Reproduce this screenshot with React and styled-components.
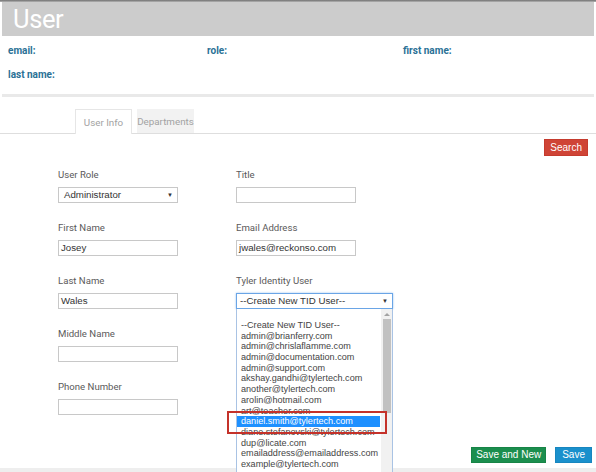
import React from 'react';
import styled, { createGlobalStyle } from 'styled-components';

const Global = createGlobalStyle`
  html, body { margin: 0; padding: 0; background: #fff; }
  body { font-family: Roboto, "Liberation Sans", sans-serif; }
`;

const Page = styled.div`
  width: 596px;
  height: 472px;
  overflow: hidden;
  position: relative;
  display: flex;
  flex-direction: column;
`;

const TopShadow = styled.div`
  height: 2px;
  background: linear-gradient(#6f6f6f, #b5b5b5);
`;

const Header = styled.header`
  margin: 0 2px;
  height: 34px;
  background: #cccccc;
  padding-left: 11px;
  h1 {
    margin: 0;
    font-family: Roboto, sans-serif;
    font-weight: 400;
    font-size: 25.5px;
    letter-spacing: -0.4px;
    line-height: 34px;
    color: #ffffff;
  }
`;

const Info = styled.div`
  display: grid;
  grid-template-columns: 199px 196px 1fr;
  grid-auto-rows: 24px;
  padding: 3px 0 0 8px;
  span {
    font-family: Roboto, sans-serif;
    font-weight: 700;
    font-size: 10px;
    line-height: 24px;
    color: #2a7196;
  }
`;

const Divider = styled.div`
  height: 3px;
  margin: 7px 2px 0;
  background: #e9e9e9;
`;

const TabBar = styled.div`
  display: flex;
  gap: 5px;
  margin-top: 12px;
  padding-left: 75px;
  height: 24px;
  border-bottom: 1px solid #dedede;
`;

const Tab = styled.div`
  width: 57px;
  box-sizing: border-box;
  display: flex;
  align-items: center;
  justify-content: center;
  font-size: 9.8px;
  color: #a3a3a3;
  background: ${p => (p.$active ? '#ffffff' : '#f2f2f2')};
  border: ${p => (p.$active ? '1px solid #e6e6e6' : 'none')};
  border-bottom: none;
  margin-bottom: ${p => (p.$active ? '-1px' : '0')};
`;

const Toolbar = styled.div`
  display: flex;
  justify-content: flex-end;
  padding: 5px 8px 0 0;
`;

const Button = styled.button`
  height: ${p => p.$h || 17}px;
  padding: 0 ${p => p.$pad || 5}px;
  border: 1px solid ${p => p.$border};
  background: ${p => p.$bg};
  color: #ffffff;
  font-family: "Liberation Sans", Arial, sans-serif;
  font-size: 10px;
  line-height: 14px;
  cursor: pointer;
`;

const Form = styled.div`
  display: grid;
  grid-template-columns: 178px 160px;
  row-gap: 18px;
  padding: 12px 0 0 58px;
`;

const Field = styled.div`
  display: flex;
  flex-direction: column;
  gap: 5px;
  position: relative;
  label {
    font-family: Roboto, sans-serif;
    font-size: 9.6px;
    line-height: 14px;
    color: #5a5a5a;
  }
`;

const Input = styled.div`
  box-sizing: border-box;
  width: ${p => p.$w || 120}px;
  height: 16px;
  border: 1px solid #c8c8c8;
  padding: 0 2px;
  font-family: "Liberation Sans", Arial, sans-serif;
  font-size: 9.7px;
  line-height: 14px;
  color: #333333;
  white-space: nowrap;
`;

const Select = styled(Input)`
  display: flex;
  justify-content: space-between;
  align-items: center;
  border-color: ${p => (p.$focus ? '#6aa5e6' : '#c8c8c8')};
  box-shadow: ${p => (p.$focus ? '0 0 2px #9cc4f0' : 'none')};
  padding: 0 4px 0 ${p => (p.$focus ? 3 : 5)}px;
  &::after {
    content: '▼';
    font-size: 6px;
    color: #333;
  }
`;

const List = styled.div`
  position: absolute;
  top: 100%;
  left: 0;
  width: 157px;
  height: 190px;
  box-sizing: border-box;
  border: 1px solid #a9c3e4;
  border-top: none;
  background: #ffffff;
  padding-top: 11px;
  z-index: 2;
`;

const Option = styled.div`
  position: relative;
  margin-right: 12px;
  padding-left: 4px;
  height: 10.7px;
  font-family: "Liberation Sans", Arial, sans-serif;
  font-size: 9.1px;
  line-height: 10.7px;
  white-space: nowrap;
  color: ${p => (p.$selected ? '#ffffff' : '#444444')};
  background: ${p => (p.$selected ? '#1e90ff' : 'transparent')};
  ${p =>
    p.$selected &&
    `&::after {
      content: '';
      position: absolute;
      z-index: 3;
      left: -10px;
      right: -7px;
      top: -5px;
      bottom: -7px;
      border: 2px solid #c4322a;
    }`}
`;

const Scrollbar = styled.div`
  position: absolute;
  top: 0;
  right: 0;
  bottom: 0;
  width: 11px;
  background: #f1f1f1;
  display: flex;
  flex-direction: column;
  align-items: center;
`;

const Arrow = styled.div`
  height: 10px;
  display: flex;
  align-items: center;
  &::before {
    content: '';
    border-left: 3px solid transparent;
    border-right: 3px solid transparent;
    border-bottom: 3px solid #a3a3a3;
  }
`;

const Thumb = styled.div`
  width: 8px;
  height: 94px;
  background: #c1c1c1;
`;

const Footer = styled.div`
  display: flex;
  justify-content: flex-end;
  gap: 9px;
  padding: 32px 4px 0 0;
`;

const BottomBand = styled.div`
  margin-top: auto;
  height: 4px;
  background: #eeeeee;
`;

const emails = [
  '--Create New TID User--',
  'admin@brianferry.com',
  'admin@chrislaflamme.com',
  'admin@documentation.com',
  'admin@support.com',
  'akshay.gandhi@tylertech.com',
  'another@tylertech.com',
  'arolin@hotmail.com',
  'art@teacher.com',
  'daniel.smith@tylertech.com',
  'diane.stefanovski@tylertech.com',
  'dup@licate.com',
  'emailaddress@emailaddress.com',
  'example@tylertech.com',
];

export default function App() {
  return (
    <Page>
      <Global />
      <TopShadow />
      <Header>
        <h1>User</h1>
      </Header>
      <Info>
        <span>email:</span>
        <span>role:</span>
        <span>first name:</span>
        <span>last name:</span>
      </Info>
      <Divider />
      <TabBar>
        <Tab $active>User Info</Tab>
        <Tab>Departments</Tab>
      </TabBar>
      <Toolbar>
        <Button $bg="#cf4436" $border="#c53b2e">Search</Button>
      </Toolbar>
      <Form>
        <Field>
          <label>User Role</label>
          <Select>Administrator</Select>
        </Field>
        <Field>
          <label>Title</label>
          <Input />
        </Field>
        <Field>
          <label>First Name</label>
          <Input>Josey</Input>
        </Field>
        <Field>
          <label>Email Address</label>
          <Input>jwales@reckonso.com</Input>
        </Field>
        <Field>
          <label>Last Name</label>
          <Input>Wales</Input>
        </Field>
        <Field>
          <label>Tyler Identity User</label>
          <Select $w={157} $focus>--Create New TID User--</Select>
          <List>
            {emails.map(e => (
              <Option key={e} $selected={e === 'daniel.smith@tylertech.com'}>{e}</Option>
            ))}
            <Scrollbar>
              <Arrow />
              <Thumb />
            </Scrollbar>
          </List>
        </Field>
        <Field>
          <label>Middle Name</label>
          <Input />
        </Field>
        <div />
        <Field>
          <label>Phone Number</label>
          <Input />
        </Field>
      </Form>
      <Footer>
        <Button $bg="#1b8e4e" $border="#178446" $pad={4} $h={16}>Save and New</Button>
        <Button $bg="#1a90cc" $border="#1786bf" $pad={6} $h={16}>Save</Button>
      </Footer>
      <BottomBand />
    </Page>
  );
}
